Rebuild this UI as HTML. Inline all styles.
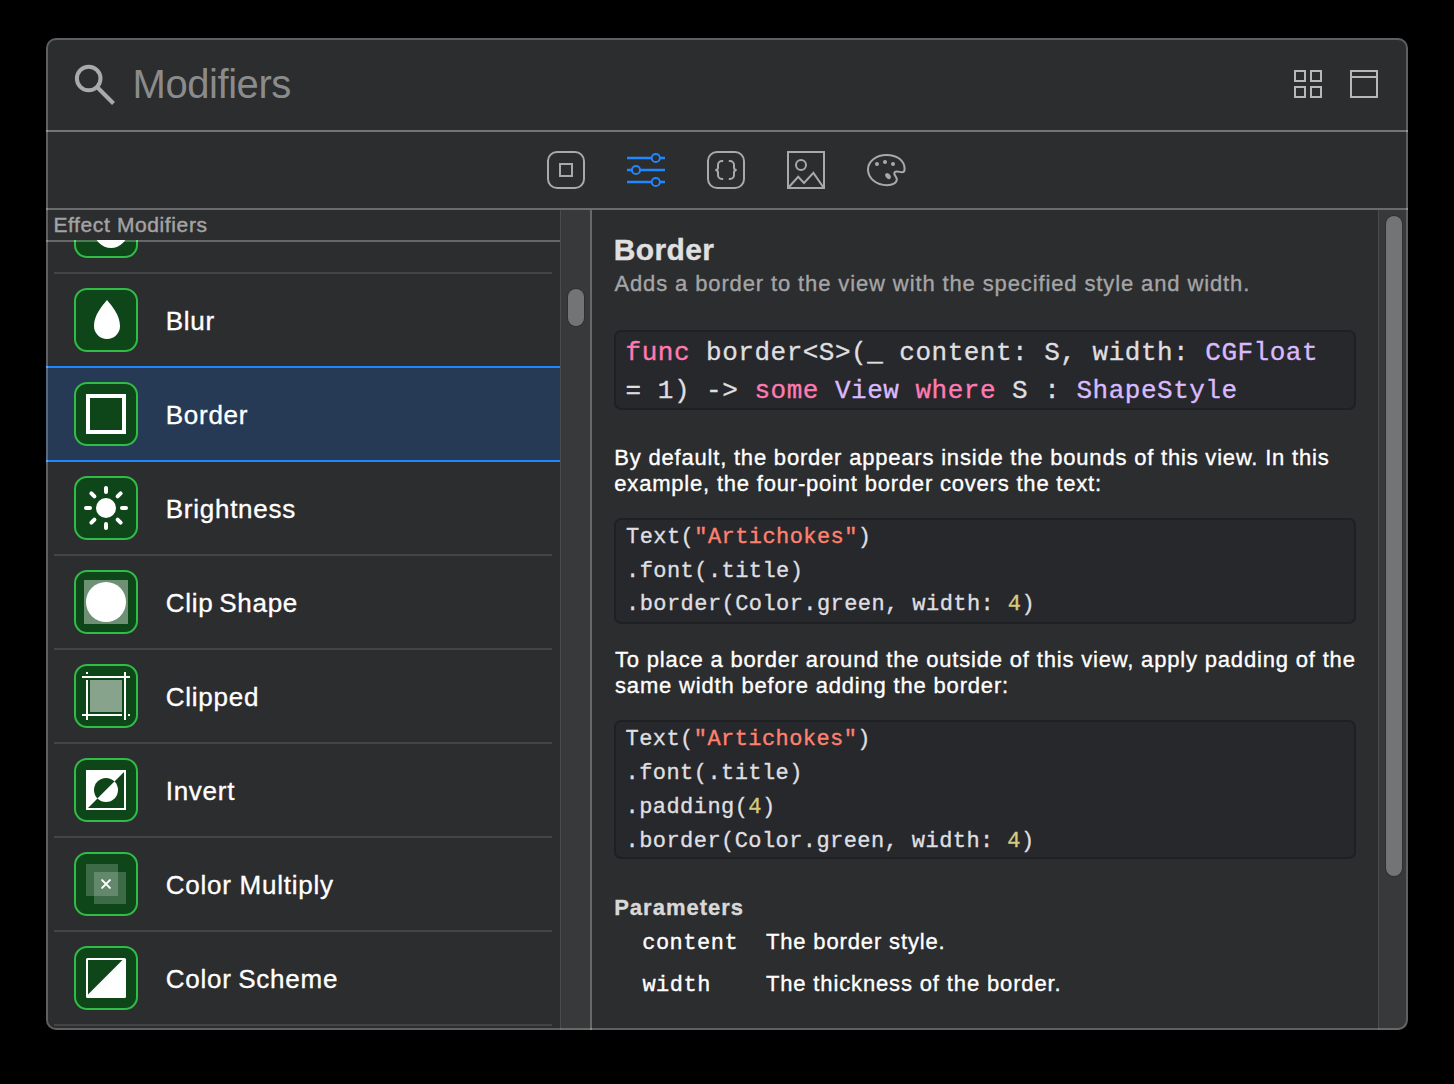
<!DOCTYPE html>
<html><head><meta charset="utf-8"><style>
html,body{margin:0;padding:0;background:#000;width:1454px;height:1084px;overflow:hidden}
.win{position:absolute;left:46px;top:38px;width:1362px;height:992px;border-radius:10px;overflow:hidden;background:#2c2d2f}
.inner{position:absolute;left:-46px;top:-38px;width:1454px;height:1084px}
.t{position:absolute;white-space:pre;-webkit-text-stroke-width:0.35px}
.b{position:absolute;display:block}
.frame{position:absolute;left:46px;top:38px;width:1362px;height:992px;border-radius:10px;border:2px solid rgba(255,255,255,0.24);box-sizing:border-box}
</style></head><body>
<div class="win"><div class="inner"><svg class="b" style="left:70px;top:60px;" width="50" height="50" viewBox="0 0 50 50"><circle cx="18.7" cy="18.5" r="11.8" fill="none" stroke="#a9aaab" stroke-width="4"/><line x1="27.5" y1="27.5" x2="43.5" y2="43.5" stroke="#a9aaab" stroke-width="4"/></svg><div class="t" style="left:132.60px;top:64.44px;font-size:40px;line-height:40px;font-family:'Liberation Sans', sans-serif;font-weight:400;color:#8b8b8c;letter-spacing:-0.45px;-webkit-text-stroke-width:0">Modifiers</div><svg class="b" style="left:1294px;top:70px;" width="28" height="28" viewBox="0 0 28 28"><rect x="1" y="1" width="10" height="10" fill="none" stroke="#b8b8b9" stroke-width="2"/><rect x="17" y="1" width="10" height="10" fill="none" stroke="#b8b8b9" stroke-width="2"/><rect x="1" y="17" width="10" height="10" fill="none" stroke="#b8b8b9" stroke-width="2"/><rect x="17" y="17" width="10" height="10" fill="none" stroke="#b8b8b9" stroke-width="2"/></svg><svg class="b" style="left:1350px;top:70px;" width="28" height="28" viewBox="0 0 28 28"><rect x="1" y="1" width="26" height="26" fill="none" stroke="#b8b8b9" stroke-width="2"/><line x1="0" y1="7" x2="28" y2="7" stroke="#b8b8b9" stroke-width="2"/></svg><div class="b" style="left:46px;top:130px;width:1362px;height:2px;background:#737475"></div><svg class="b" style="left:546px;top:150px;" width="40" height="40" viewBox="0 0 40 40"><rect x="2" y="2" width="36" height="36" rx="9" fill="none" stroke="#a9a9aa" stroke-width="2"/><rect x="14" y="14" width="12" height="12" fill="none" stroke="#a9a9aa" stroke-width="2"/></svg><svg class="b" style="left:626px;top:150px;" width="42" height="40" viewBox="0 0 42 40"><line x1="1" y1="8" x2="39" y2="8" stroke="#2187ff" stroke-width="2.4"/><line x1="1" y1="20" x2="39" y2="20" stroke="#2187ff" stroke-width="2.4"/><line x1="1" y1="32" x2="39" y2="32" stroke="#2187ff" stroke-width="2.4"/><circle cx="29.8" cy="8" r="4.1" fill="#2c2d2f" stroke="#2187ff" stroke-width="2"/><circle cx="10" cy="20" r="4.1" fill="#2c2d2f" stroke="#2187ff" stroke-width="2"/><circle cx="29.8" cy="32" r="4.1" fill="#2c2d2f" stroke="#2187ff" stroke-width="2"/></svg><svg class="b" style="left:706px;top:150px;" width="40" height="40" viewBox="0 0 40 40"><rect x="2" y="2" width="36" height="36" rx="9" fill="none" stroke="#a9a9aa" stroke-width="2"/><path d="M17.2 11 H16 A4 4 0 0 0 12 15 V17.5 Q12 20 9.3 20 Q12 20 12 22.5 V25 A4 4 0 0 0 16 29 H17.2" fill="none" stroke="#a9a9aa" stroke-width="2"/><path d="M22.8 11 H24 A4 4 0 0 1 28 15 V17.5 Q28 20 30.7 20 Q28 20 28 22.5 V25 A4 4 0 0 1 24 29 H22.8" fill="none" stroke="#a9a9aa" stroke-width="2"/></svg><svg class="b" style="left:786px;top:150px;" width="40" height="40" viewBox="0 0 40 40"><rect x="2" y="2" width="36" height="36" fill="none" stroke="#a9a9aa" stroke-width="2"/><circle cx="15" cy="15" r="5" fill="none" stroke="#a9a9aa" stroke-width="2"/><path d="M2.5 37.5 L12.2 26.8 L18 33 L27.4 22.9 L37.5 37.5" fill="none" stroke="#a9a9aa" stroke-width="2"/></svg><svg class="b" style="left:862px;top:148px;" width="48" height="44" viewBox="0 0 48 44"><path d="M24.5 7 C14 7 6 13.5 6 21.5 C6 30 14 37.2 25 37.2 C30.5 37.2 34.8 35 34.8 31.5 C34.8 29 32.3 27.5 32.3 25.5 C32.3 24 33.3 23.4 35 23.4 C36.5 23.4 38.5 24.3 40 24.3 C41.5 24.3 42.6 23 42.6 21 C42.6 12.5 35 7 24.5 7 Z" fill="none" stroke="#a9a9aa" stroke-width="2"/><circle cx="15" cy="16" r="2" fill="#a9a9aa"/><circle cx="23" cy="14.1" r="2" fill="#a9a9aa"/><circle cx="31" cy="16" r="2" fill="#a9a9aa"/><ellipse cx="26" cy="28.1" rx="2.3" ry="3.3" transform="rotate(-40 26 28.1)" fill="#a9a9aa"/></svg><div class="b" style="left:46px;top:208px;width:1362px;height:2px;background:#6a6b6c"></div><div class="b" style="left:46px;top:210px;width:514px;height:820px;overflow:hidden"><div class="b" style="left:-46px;top:-210px;width:1454px;height:1084px"><svg class="b" style="left:74px;top:194px;" width="64" height="64" viewBox="0 0 64 64"><rect x="1" y="1" width="62" height="62" rx="12" fill="#0e4619" stroke="#31bb47" stroke-width="2"/><circle cx="37" cy="37.3" r="16.7" fill="#ffffff"/></svg><div class="b" style="left:54px;top:272px;width:498px;height:2px;background:#434446"></div><svg class="b" style="left:74px;top:288px;" width="64" height="64" viewBox="0 0 64 64"><rect x="1" y="1" width="62" height="62" rx="12" fill="#0e4619" stroke="#31bb47" stroke-width="2"/><path d="M33 12 C28 18 20 27 20 38 A13 13 0 0 0 46 38 C46 27 38 18 33 12 Z" fill="#ffffff"/></svg><div class="t" style="left:165.70px;top:307.99px;font-size:26px;line-height:26px;font-family:'Liberation Sans', sans-serif;font-weight:400;color:#ffffff;letter-spacing:0.75px;word-spacing:0px">Blur</div><div class="b" style="left:46px;top:366px;width:514px;height:96px;background:#263a55"></div><div class="b" style="left:46px;top:366px;width:514px;height:2px;background:#1e86ff"></div><div class="b" style="left:46px;top:460px;width:514px;height:2px;background:#1e86ff"></div><svg class="b" style="left:74px;top:382px;" width="64" height="64" viewBox="0 0 64 64"><rect x="1" y="1" width="62" height="62" rx="12" fill="#0e4619" stroke="#31bb47" stroke-width="2"/><rect x="14" y="14" width="36" height="36" fill="none" stroke="#ffffff" stroke-width="4"/></svg><div class="t" style="left:165.70px;top:401.99px;font-size:26px;line-height:26px;font-family:'Liberation Sans', sans-serif;font-weight:400;color:#ffffff;letter-spacing:0.75px;word-spacing:0px">Border</div><svg class="b" style="left:74px;top:476px;" width="64" height="64" viewBox="0 0 64 64"><rect x="1" y="1" width="62" height="62" rx="12" fill="#0e4619" stroke="#31bb47" stroke-width="2"/><circle cx="32" cy="32" r="10" fill="#ffffff"/><line x1="32" y1="12" x2="32" y2="16" stroke="#ffffff" stroke-width="4" stroke-linecap="round" transform="rotate(0 32 32)"/><line x1="32" y1="11.3" x2="32" y2="15.6" stroke="#ffffff" stroke-width="4" stroke-linecap="round" transform="rotate(45 32 32)"/><line x1="32" y1="12" x2="32" y2="16" stroke="#ffffff" stroke-width="4" stroke-linecap="round" transform="rotate(90 32 32)"/><line x1="32" y1="11.3" x2="32" y2="15.6" stroke="#ffffff" stroke-width="4" stroke-linecap="round" transform="rotate(135 32 32)"/><line x1="32" y1="12" x2="32" y2="16" stroke="#ffffff" stroke-width="4" stroke-linecap="round" transform="rotate(180 32 32)"/><line x1="32" y1="11.3" x2="32" y2="15.6" stroke="#ffffff" stroke-width="4" stroke-linecap="round" transform="rotate(225 32 32)"/><line x1="32" y1="12" x2="32" y2="16" stroke="#ffffff" stroke-width="4" stroke-linecap="round" transform="rotate(270 32 32)"/><line x1="32" y1="11.3" x2="32" y2="15.6" stroke="#ffffff" stroke-width="4" stroke-linecap="round" transform="rotate(315 32 32)"/></svg><div class="t" style="left:165.70px;top:495.99px;font-size:26px;line-height:26px;font-family:'Liberation Sans', sans-serif;font-weight:400;color:#ffffff;letter-spacing:0.75px;word-spacing:0px">Brightness</div><div class="b" style="left:54px;top:554px;width:498px;height:2px;background:#434446"></div><svg class="b" style="left:74px;top:570px;" width="64" height="64" viewBox="0 0 64 64"><rect x="1" y="1" width="62" height="62" rx="12" fill="#0e4619" stroke="#31bb47" stroke-width="2"/><rect x="10" y="10" width="44" height="44" fill="rgba(255,255,255,0.4)"/><circle cx="32" cy="32" r="20" fill="#ffffff"/></svg><div class="t" style="left:165.70px;top:589.99px;font-size:26px;line-height:26px;font-family:'Liberation Sans', sans-serif;font-weight:400;color:#ffffff;letter-spacing:0.75px;word-spacing:-2.3px">Clip Shape</div><div class="b" style="left:54px;top:648px;width:498px;height:2px;background:#434446"></div><svg class="b" style="left:74px;top:664px;" width="64" height="64" viewBox="0 0 64 64"><rect x="1" y="1" width="62" height="62" rx="12" fill="#0e4619" stroke="#31bb47" stroke-width="2"/><rect x="16" y="16" width="32" height="32" fill="rgba(255,255,255,0.5)"/><rect x="8" y="12" width="48" height="2" fill="#ffffff"/><rect x="50" y="8" width="2" height="48" fill="#ffffff"/><rect x="12" y="16" width="2" height="40" fill="#ffffff"/><rect x="8" y="50" width="40" height="2" fill="#ffffff"/><rect x="12" y="8" width="2" height="2" fill="#ffffff"/><rect x="54" y="50" width="2" height="2" fill="#ffffff"/></svg><div class="t" style="left:165.70px;top:683.99px;font-size:26px;line-height:26px;font-family:'Liberation Sans', sans-serif;font-weight:400;color:#ffffff;letter-spacing:0.75px;word-spacing:0px">Clipped</div><div class="b" style="left:54px;top:742px;width:498px;height:2px;background:#434446"></div><svg class="b" style="left:74px;top:758px;" width="64" height="64" viewBox="0 0 64 64"><rect x="1" y="1" width="62" height="62" rx="12" fill="#0e4619" stroke="#31bb47" stroke-width="2"/><defs><clipPath id="ul"><polygon points="0,0 64,0 0,64"/></clipPath><clipPath id="lr"><polygon points="64,0 64,64 0,64"/></clipPath></defs><rect x="12" y="12" width="40" height="40" fill="#ffffff"/><polygon points="14,50 50,14 50,50" fill="#0e4619"/><circle cx="32" cy="32" r="12" fill="#0e4619" clip-path="url(#ul)"/><circle cx="32" cy="32" r="12" fill="#ffffff" clip-path="url(#lr)"/></svg><div class="t" style="left:165.70px;top:777.99px;font-size:26px;line-height:26px;font-family:'Liberation Sans', sans-serif;font-weight:400;color:#ffffff;letter-spacing:0.75px;word-spacing:0px">Invert</div><div class="b" style="left:54px;top:836px;width:498px;height:2px;background:#434446"></div><svg class="b" style="left:74px;top:852px;" width="64" height="64" viewBox="0 0 64 64"><rect x="1" y="1" width="62" height="62" rx="12" fill="#0e4619" stroke="#31bb47" stroke-width="2"/><rect x="12" y="12" width="32" height="32" fill="rgba(255,255,255,0.2)"/><rect x="20" y="20" width="32" height="32" fill="rgba(255,255,255,0.2)"/><path d="M28.1 28.1 L35.9 35.9 M35.9 28.1 L28.1 35.9" stroke="#ffffff" stroke-width="2" stroke-linecap="round"/></svg><div class="t" style="left:165.70px;top:871.99px;font-size:26px;line-height:26px;font-family:'Liberation Sans', sans-serif;font-weight:400;color:#ffffff;letter-spacing:0.75px;word-spacing:0px">Color Multiply</div><div class="b" style="left:54px;top:930px;width:498px;height:2px;background:#434446"></div><svg class="b" style="left:74px;top:946px;" width="64" height="64" viewBox="0 0 64 64"><rect x="1" y="1" width="62" height="62" rx="12" fill="#0e4619" stroke="#31bb47" stroke-width="2"/><rect x="12" y="12" width="40" height="40" rx="1.5" fill="#ffffff"/><polygon points="14,14 48.5,14 14,48.5" fill="#0e4619"/></svg><div class="t" style="left:165.70px;top:965.99px;font-size:26px;line-height:26px;font-family:'Liberation Sans', sans-serif;font-weight:400;color:#ffffff;letter-spacing:0.75px;word-spacing:-1.3px">Color Scheme</div><div class="b" style="left:54px;top:1024px;width:498px;height:2px;background:#434446"></div></div></div><div class="b" style="left:46px;top:210px;width:514px;height:30px;background:#2c2d2f"></div><div class="t" style="left:53.40px;top:213.72px;font-size:21px;line-height:21px;font-family:'Liberation Sans', sans-serif;font-weight:400;color:#a3a3a3;letter-spacing:0.62px;-webkit-text-stroke-width:0.45px">Effect Modifiers</div><div class="b" style="left:46px;top:240px;width:514px;height:2px;background:rgba(255,255,255,0.28)"></div><div class="b" style="left:560px;top:210px;width:30px;height:820px;background:#38393b;border-left:1px solid #4a4b4d;box-sizing:border-box"></div><div class="b" style="left:568px;top:289px;width:16px;height:37px;background:#737476;border-radius:8px;box-shadow:0 0 0 1px #2e2f31"></div><div class="b" style="left:590px;top:210px;width:2px;height:820px;background:#676869"></div><div class="t" style="left:613.70px;top:234.60px;font-size:30px;line-height:30px;font-family:'Liberation Sans', sans-serif;font-weight:700;color:#e0e0e0;letter-spacing:0.4px;">Border</div><div class="t" style="left:614.40px;top:273.08px;font-size:22px;line-height:22px;font-family:'Liberation Sans', sans-serif;font-weight:400;color:#a5a5a6;letter-spacing:0.88px;">Adds a border to the view with the specified style and width.</div><div class="b" style="left:614px;top:330px;width:742px;height:80px;background:#27282b;border:2px solid #1f2023;border-radius:7px;box-sizing:border-box"></div><div class="t" style="left:625.60px;top:339.58px;font-size:26px;line-height:26px;font-family:'Liberation Mono', monospace;font-weight:400;color:#dfdfe0;letter-spacing:0.5px;"><span style="color:#ff7ab2">func</span><span style="color:#dfdfe0"> border&lt;S&gt;(_ content: S, width: </span><span style="color:#dabaff">CGFloat</span></div><div class="t" style="left:625.60px;top:377.58px;font-size:26px;line-height:26px;font-family:'Liberation Mono', monospace;font-weight:400;color:#dfdfe0;letter-spacing:0.5px;"><span style="color:#dfdfe0">= 1) -&gt; </span><span style="color:#ff7ab2">some</span><span style="color:#dfdfe0"> </span><span style="color:#dabaff">View</span><span style="color:#dfdfe0"> </span><span style="color:#ff7ab2">where</span><span style="color:#dfdfe0"> S : </span><span style="color:#dabaff">ShapeStyle</span></div><div class="t" style="left:614.30px;top:447.38px;font-size:22px;line-height:22px;font-family:'Liberation Sans', sans-serif;font-weight:400;color:#ffffff;letter-spacing:0.8px;">By default, the border appears inside the bounds of this view. In this</div><div class="t" style="left:614.30px;top:473.38px;font-size:22px;line-height:22px;font-family:'Liberation Sans', sans-serif;font-weight:400;color:#ffffff;letter-spacing:0.8px;">example, the four-point border covers the text:</div><div class="b" style="left:614px;top:518px;width:742px;height:106px;background:#27282b;border:2px solid #1f2023;border-radius:7px;box-sizing:border-box"></div><div class="t" style="left:626.10px;top:527.15px;font-size:22px;line-height:22px;font-family:'Liberation Mono', monospace;font-weight:400;color:#dfdfe0;letter-spacing:0.43px;"><span style="color:#dfdfe0">Text(</span><span style="color:#ff8170">&quot;Artichokes&quot;</span><span style="color:#dfdfe0">)</span></div><div class="t" style="left:626.10px;top:560.65px;font-size:22px;line-height:22px;font-family:'Liberation Mono', monospace;font-weight:400;color:#dfdfe0;letter-spacing:0.43px;">.font(.title)</div><div class="t" style="left:626.10px;top:594.45px;font-size:22px;line-height:22px;font-family:'Liberation Mono', monospace;font-weight:400;color:#dfdfe0;letter-spacing:0.43px;"><span style="color:#dfdfe0">.border(Color.green, width: </span><span style="color:#d9c97c">4</span><span style="color:#dfdfe0">)</span></div><div class="t" style="left:615.00px;top:649.38px;font-size:22px;line-height:22px;font-family:'Liberation Sans', sans-serif;font-weight:400;color:#ffffff;letter-spacing:0.82px;">To place a border around the outside of this view, apply padding of the</div><div class="t" style="left:615.00px;top:675.38px;font-size:22px;line-height:22px;font-family:'Liberation Sans', sans-serif;font-weight:400;color:#ffffff;letter-spacing:0.82px;">same width before adding the border:</div><div class="b" style="left:614px;top:720px;width:742px;height:139px;background:#27282b;border:2px solid #1f2023;border-radius:7px;box-sizing:border-box"></div><div class="t" style="left:625.60px;top:729.35px;font-size:22px;line-height:22px;font-family:'Liberation Mono', monospace;font-weight:400;color:#dfdfe0;letter-spacing:0.43px;"><span style="color:#dfdfe0">Text(</span><span style="color:#ff8170">&quot;Artichokes&quot;</span><span style="color:#dfdfe0">)</span></div><div class="t" style="left:625.60px;top:762.85px;font-size:22px;line-height:22px;font-family:'Liberation Mono', monospace;font-weight:400;color:#dfdfe0;letter-spacing:0.43px;">.font(.title)</div><div class="t" style="left:625.60px;top:796.75px;font-size:22px;line-height:22px;font-family:'Liberation Mono', monospace;font-weight:400;color:#dfdfe0;letter-spacing:0.43px;"><span style="color:#dfdfe0">.padding(</span><span style="color:#d9c97c">4</span><span style="color:#dfdfe0">)</span></div><div class="t" style="left:625.60px;top:831.05px;font-size:22px;line-height:22px;font-family:'Liberation Mono', monospace;font-weight:400;color:#dfdfe0;letter-spacing:0.43px;"><span style="color:#dfdfe0">.border(Color.green, width: </span><span style="color:#d9c97c">4</span><span style="color:#dfdfe0">)</span></div><div class="t" style="left:614.20px;top:897.38px;font-size:22px;line-height:22px;font-family:'Liberation Sans', sans-serif;font-weight:700;color:#d8d8d8;letter-spacing:1.0px;">Parameters</div><div class="t" style="left:642.20px;top:933.35px;font-size:22px;line-height:22px;font-family:'Liberation Mono', monospace;font-weight:400;color:#ffffff;letter-spacing:0.5px;">content</div><div class="t" style="left:765.90px;top:931.38px;font-size:22px;line-height:22px;font-family:'Liberation Sans', sans-serif;font-weight:400;color:#ffffff;letter-spacing:0.86px;">The border style.</div><div class="t" style="left:642.40px;top:975.15px;font-size:22px;line-height:22px;font-family:'Liberation Mono', monospace;font-weight:400;color:#ffffff;letter-spacing:0.5px;">width</div><div class="t" style="left:765.90px;top:973.38px;font-size:22px;line-height:22px;font-family:'Liberation Sans', sans-serif;font-weight:400;color:#ffffff;letter-spacing:0.86px;">The thickness of the border.</div><div class="b" style="left:1378px;top:210px;width:28px;height:820px;background:#38393b;border-left:1px solid #4a4b4d;box-sizing:border-box"></div><div class="b" style="left:1386px;top:216px;width:16px;height:660px;background:#737476;border-radius:8px;box-shadow:0 0 0 1px #2e2f31"></div></div></div>
<div class="frame"></div>
</body></html>
